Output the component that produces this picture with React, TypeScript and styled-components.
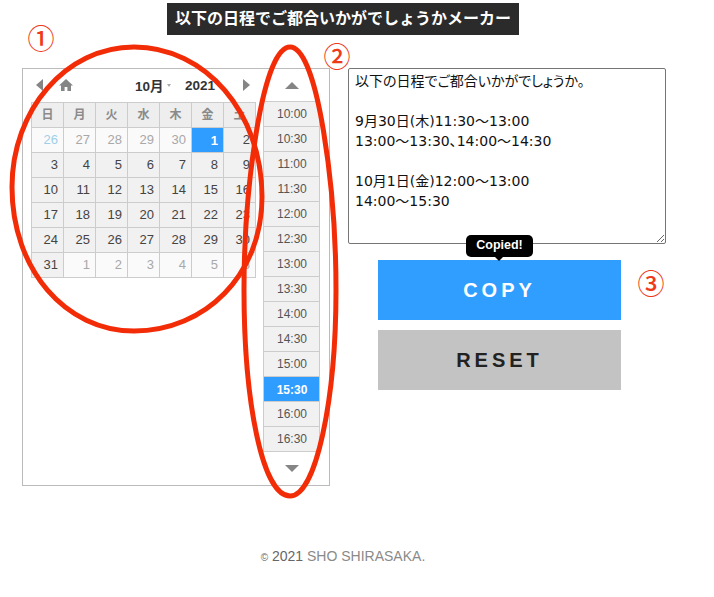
import React from "react";
import styled, { createGlobalStyle } from "styled-components";

const JP = `"Liberation Sans", "Noto Sans CJK JP", sans-serif`;

const Global = createGlobalStyle`
  html, body { margin: 0; padding: 0; background: #fff; }
  body { font-family: ${JP}; }
`;

const Page = styled.div`
  position: relative;
  width: 714px;
  height: 597px;
  overflow: hidden;
  background: #fff;
`;

const Header = styled.header`
  width: 686px;
  padding-top: 3px;
  display: flex;
  justify-content: center;
`;

const Title = styled.h1`
  margin: 0;
  width: 352px;
  height: 32px;
  background: #2b2b2b;
  color: #fff;
  font-size: 16px;
  font-weight: 700;
  line-height: 32px;
  text-align: center;
  white-space: nowrap;
`;

const Main = styled.main`
  display: flex;
  align-items: flex-start;
  gap: 18px;
  margin: 33px 0 0 22px;
`;

const Panel = styled.section`
  box-sizing: border-box;
  width: 308px;
  height: 418px;
  border: 1px solid #bbb;
  display: flex;
  padding-left: 8px;
  gap: 8px;
`;

const CalendarCol = styled.div`
  width: 224px;
  flex: none;
`;

const Nav = styled.div`
  height: 33px;
  padding-bottom: 1px;
  box-sizing: border-box;
  display: flex;
  align-items: center;
  font-size: 13.5px;
  font-weight: 700;
  color: #333;
`;

const NavIcon = styled.svg<{ $ml: number }>`
  flex: none;
  margin-left: ${(p) => p.$ml}px;
  fill: #858585;
`;

const MonthLabel = styled.span`
  margin-left: 62px;
  width: 30px;
  white-space: nowrap;
`;

const Caret = styled.span`
  width: 0;
  height: 0;
  margin: 1px 0 0 2px;
  border-left: 2.5px solid transparent;
  border-right: 2.5px solid transparent;
  border-top: 3px solid #aaa;
`;

const YearLabel = styled.span`
  margin-left: 14px;
  width: 30px;
`;

const Grid = styled.div`
  display: grid;
  grid-template-columns: repeat(7, 32px);
  grid-auto-rows: 25px;
  border-top: 1px solid #ccc;
  border-left: 1px solid #ccc;
  box-sizing: border-box;
  width: 225px;
`;

const HeadCell = styled.div`
  border-right: 1px solid #ccc;
  border-bottom: 1px solid #ccc;
  background: #eeeeee;
  color: #8a8a8a;
  font-size: 12px;
  font-weight: 700;
  line-height: 24px;
  text-align: center;
`;

const DayCell = styled.div<{ $kind: "cur" | "off" | "blue" | "sel" }>`
  border-right: 1px solid #ccc;
  border-bottom: 1px solid #ccc;
  background: ${(p) =>
    p.$kind === "sel" ? "#2f9cff" : p.$kind === "cur" ? "#f1f1f1" : "#fafafa"};
  color: ${(p) =>
    p.$kind === "sel"
      ? "#fff"
      : p.$kind === "cur"
        ? "#444"
        : p.$kind === "blue"
          ? "#9fcfe8"
          : "#a8a8a8"};
  font-size: 13px;
  font-weight: ${(p) => (p.$kind === "sel" ? 700 : 400)};
  line-height: ${(p) => (p.$kind === "sel" ? 26 : 24)}px;
  text-align: right;
  padding-right: 5px;
`;

const TimeCol = styled.div`
  width: 57px;
  flex: none;
  display: flex;
  flex-direction: column;
`;

const ArrowBtn = styled.div`
  height: 32px;
  display: flex;
  align-items: center;
  justify-content: center;
`;

const TimeList = styled.div`
  border-left: 1px solid #ccc;
  border-right: 1px solid #ccc;
  border-top: 1px solid #ccc;
`;

const TimeCell = styled.div<{ $sel?: boolean }>`
  box-sizing: border-box;
  height: 25px;
  padding-left: 1px;
  border-bottom: 1px solid #ccc;
  background: ${(p) => (p.$sel ? "#2f9cff" : "#f1f1f1")};
  color: ${(p) => (p.$sel ? "#fff" : "#555")};
  font-size: 12px;
  font-weight: ${(p) => (p.$sel ? 700 : 400)};
  line-height: ${(p) => (p.$sel ? 26 : 24)}px;
  text-align: center;
`;

const RightCol = styled.div`
  width: 318px;
  flex: none;
`;

const Memo = styled.textarea`
  display: block;
  box-sizing: border-box;
  width: 318px;
  height: 176px;
  margin: 0;
  padding: 2px 6px;
  border: 1px solid #767676;
  border-radius: 2px;
  outline: none;
  color: #111;
  background: #fff;
  font-family: "DejaVu Sans", "Noto Sans CJK JP", sans-serif;
  font-feature-settings: "palt";
  font-size: 14px;
  line-height: 20px;
`;

const Actions = styled.div`
  margin: 16px 0 0 30px;
  width: 243px;
  display: flex;
  flex-direction: column;
  gap: 10px;
`;

const CopyWrap = styled.div`
  position: relative;
`;

const Action = styled.button<{ $primary?: boolean }>`
  display: block;
  width: 243px;
  height: 60px;
  border: 0;
  margin: 0;
  padding: 0;
  background: ${(p) => (p.$primary ? "#2f9eff" : "#c3c3c3")};
  color: ${(p) => (p.$primary ? "#fff" : "#222")};
  font-family: "Liberation Sans", sans-serif;
  font-size: 20px;
  font-weight: 700;
  letter-spacing: 4px;
`;

const Tooltip = styled.div`
  position: absolute;
  left: 88px;
  top: -25px;
  width: 67px;
  height: 22px;
  border-radius: 5px;
  background: #000;
  color: #fff;
  font-size: 12.5px;
  font-weight: 700;
  line-height: 21px;
  text-align: center;
  &::after {
    content: "";
    position: absolute;
    left: 29px;
    top: 22px;
    border-left: 4px solid transparent;
    border-right: 4px solid transparent;
    border-top: 4px solid #000;
  }
`;

const Footer = styled.footer`
  width: 686px;
  margin-top: 62px;
  text-align: center;
  font-size: 14px;
  line-height: 16px;
  color: #666;
`;

const Small = styled.span`
  font-size: 10px;
`;

const Author = styled.span`
  color: #8a8a8a;
`;

const Scribble = styled.svg`
  position: absolute;
  left: 0;
  top: 0;
  pointer-events: none;
`;

const Mark = styled.span<{ $x: number; $y: number }>`
  position: absolute;
  left: ${(p) => p.$x}px;
  top: ${(p) => p.$y}px;
  width: 30px;
  text-align: center;
  color: #ef3a1a;
  font-family: "Noto Sans CJK JP", sans-serif;
  font-size: 27px;
  font-weight: 500;
  line-height: 30px;
`;

const WEEK = ["日", "月", "火", "水", "木", "金", "土"];
type Kind = "cur" | "off" | "blue" | "sel";
const DAYS: [number, Kind][] = [
  [26, "blue"], [27, "off"], [28, "off"], [29, "off"], [30, "off"], [1, "sel"], [2, "cur"],
  ...[3, 4, 5, 6, 7, 8, 9, 10, 11, 12, 13, 14, 15, 16, 17, 18, 19, 20, 21, 22, 23, 24, 25, 26, 27, 28, 29, 30, 31].map(
    (d) => [d, "cur"] as [number, Kind]
  ),
  [1, "off"], [2, "off"], [3, "off"], [4, "off"], [5, "off"], [6, "off"],
];
const TIMES = ["10:00", "10:30", "11:00", "11:30", "12:00", "12:30", "13:00", "13:30", "14:00", "14:30", "15:00", "15:30", "16:00", "16:30"];
const MEMO = "以下の日程でご都合いかがでしょうか。\n\n9月30日(木)11:30～13:00\n13:00～13:30、14:00～14:30\n\n10月1日(金)12:00～13:00\n14:00～15:30";

export default function App() {
  return (
    <Page>
      <Global />
      <Header>
        <Title>以下の日程でご都合いかがでしょうかメーカー</Title>
      </Header>
      <Main>
        <Panel>
          <CalendarCol>
            <Nav>
              <NavIcon $ml={5} width="7" height="12" viewBox="0 0 7 12">
                <path d="M7 0v12L0 6z" />
              </NavIcon>
              <NavIcon $ml={16} width="14" height="12" viewBox="0 0 14 12">
                <path d="M7 0 0 6.5h2V12h3.6V8h2.8v4H12V6.500h2z" />
              </NavIcon>
              <MonthLabel>10月</MonthLabel>
              <Caret />
              <YearLabel>2021</YearLabel>
              <NavIcon $ml={28} width="7" height="12" viewBox="0 0 7 12">
                <path d="M0 0v12l7-6z" />
              </NavIcon>
            </Nav>
            <Grid>
              {WEEK.map((w) => (
                <HeadCell key={w}>{w}</HeadCell>
              ))}
              {DAYS.map(([d, k], i) => (
                <DayCell key={i} $kind={k}>
                  {d}
                </DayCell>
              ))}
            </Grid>
          </CalendarCol>
          <TimeCol>
            <ArrowBtn>
              <svg width="14" height="7" viewBox="0 0 14 7" fill="#858585">
                <path d="M7 0l7 7H0z" />
              </svg>
            </ArrowBtn>
            <TimeList>
              {TIMES.map((t) => (
                <TimeCell key={t} $sel={t === "15:30"}>
                  {t}
                </TimeCell>
              ))}
            </TimeList>
            <ArrowBtn>
              <svg width="14" height="7" viewBox="0 0 14 7" fill="#858585">
                <path d="M0 0h14L7 7z" />
              </svg>
            </ArrowBtn>
          </TimeCol>
        </Panel>
        <RightCol>
          <Memo readOnly value={MEMO} />
          <Actions>
            <CopyWrap>
              <Action $primary>COPY</Action>
              <Tooltip>Copied!</Tooltip>
            </CopyWrap>
            <Action>RESET</Action>
          </Actions>
        </RightCol>
      </Main>
      <Footer>
        <Small>©</Small> 2021 <Author>SHO SHIRASAKA.</Author>
      </Footer>
      <Scribble width="714" height="597" viewBox="0 0 714 597" fill="none" stroke="#f32c08" strokeWidth="5">
        <path d="M134 47C66 47 12 110 12 187C12 270 66 331 134 331C205 331 262 275 262 197C262 112 205 47 134 47Z" />
        <path d="M290 47C262 47 244 190 244 290C244 400 262 496 290 496C316 496 336 400 336 290C336 190 318 47 290 47Z" />
      </Scribble>
      <Mark $x={26} $y={23}>①</Mark>
      <Mark $x={322} $y={41}>②</Mark>
      <Mark $x={636} $y={268}>③</Mark>
    </Page>
  );
}
